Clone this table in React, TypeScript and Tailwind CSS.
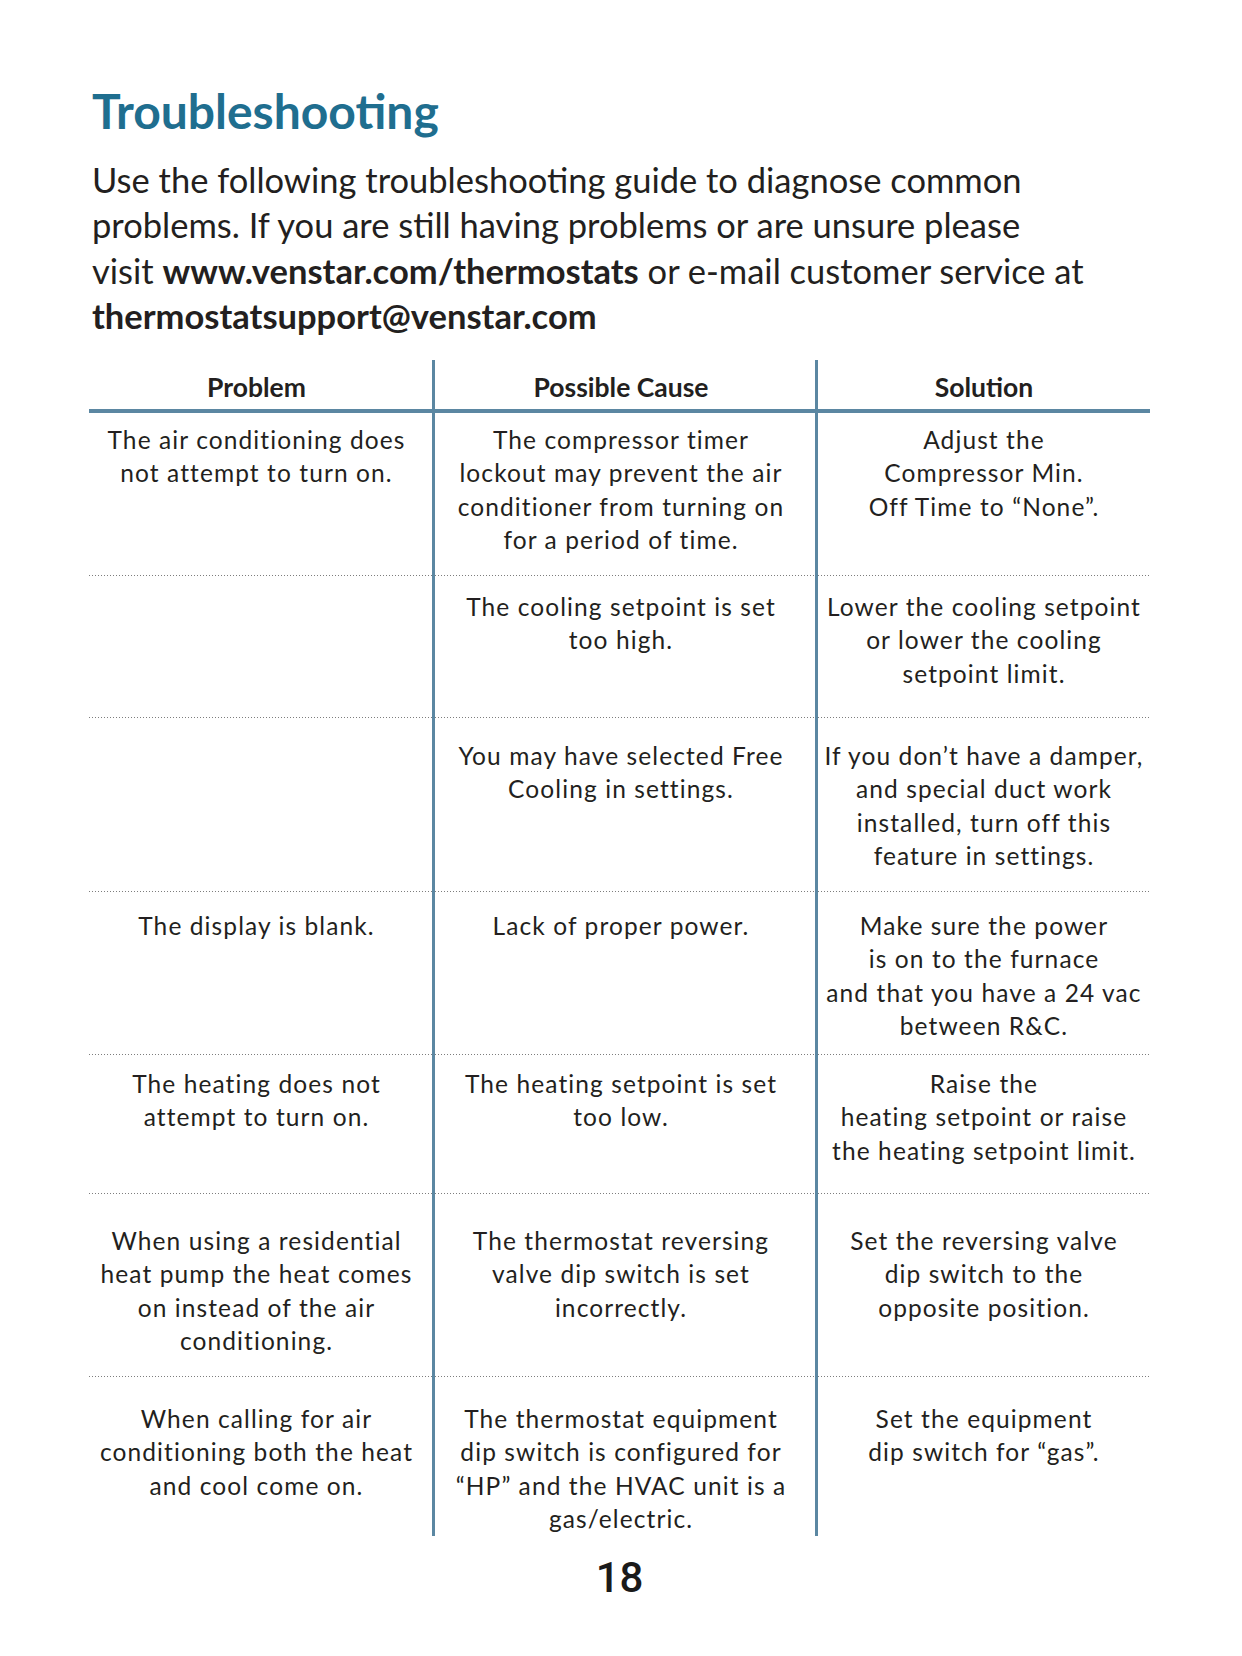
import React from "react";

const LINE = "border-[#5b87a2]";

type Row = { h: string; pt: string; a: string[]; b: string[]; c: string[] };

const rows: Row[] = [
  {
    h: "h-[163px]",
    pt: "pt-[10px]",
    a: ["The air conditioning does", "not attempt to turn on."],
    b: ["The compressor timer", "lockout may prevent the air", "conditioner from turning on", "for a period of time."],
    c: ["Adjust the", "Compressor Min.", "Off Time to “None”."],
  },
  {
    h: "h-[142px]",
    pt: "pt-[14px]",
    a: [],
    b: ["The cooling setpoint is set", "too high."],
    c: ["Lower the cooling setpoint", "or lower the cooling", "setpoint limit."],
  },
  {
    h: "h-[174px]",
    pt: "pt-[21px]",
    a: [],
    b: ["You may have selected Free", "Cooling in settings."],
    c: ["If you don’t have a damper,", "and special duct work", "installed, turn off this", "feature in settings."],
  },
  {
    h: "h-[163px]",
    pt: "pt-[17px]",
    a: ["The display is blank."],
    b: ["Lack of proper power."],
    c: ["Make sure the power", "is on to the furnace", "and that you have a 24 vac", "between R&C."],
  },
  {
    h: "h-[139px]",
    pt: "pt-[12px]",
    a: ["The heating does not", "attempt to turn on."],
    b: ["The heating setpoint is set", "too low."],
    c: ["Raise the", "heating setpoint or raise", "the heating setpoint limit."],
  },
  {
    h: "h-[183px]",
    pt: "pt-[30px]",
    a: ["When using a residential", "heat pump the heat comes", "on instead of the air", "conditioning."],
    b: ["The thermostat reversing", "valve dip switch is set", "incorrectly."],
    c: ["Set the reversing valve", "dip switch to the", "opposite position."],
  },
  {
    h: "h-[156px]",
    pt: "pt-[25px]",
    a: ["When calling for air", "conditioning both the heat", "and cool come on."],
    b: ["The thermostat equipment", "dip switch is configured for", "“HP” and the HVAC unit is a", "gas/electric."],
    c: ["Set the equipment", "dip switch for “gas”."],
  },
];

function Lines({ items }: { items: string[] }) {
  return (
    <>
      {items.map((t, i) => (
        <div key={i} className="whitespace-nowrap">
          {t}
        </div>
      ))}
    </>
  );
}

function Dotted() {
  return <div className="h-px bg-[linear-gradient(to_right,#7d7d7d_1px,transparent_1px)] bg-[length:3px_1px]" />;
}

export default function App() {
  return (
    <div
      className="w-[1242px] h-[1656px] bg-white text-[#231f20] pt-[87px]"
      style={{ fontFamily: "Lato, 'Open Sans', sans-serif" }}
    >
      <div className="ml-[89px] w-[1061px]">
        <h1 className="pl-[3px] text-[48px] leading-[48px] font-bold text-[#1f6e8f]">Troubleshooting</h1>
        <p className="pl-[3px] mt-[22px] text-[34.5px] leading-[45.4px]">
          Use the following troubleshooting guide to diagnose common
          <br />
          problems. If you are still having problems or are unsure please
          <br />
          visit <span className="font-bold">www.venstar.com/thermostats</span> or e-mail customer service at
          <br />
          <span className="font-bold">thermostatsupport@venstar.com</span>
        </p>

        <div className="mt-[21px]">
          <div className="flex h-[49px] text-[26.5px] leading-[26px] font-bold text-center">
            <div className="w-[343px] pt-[14px] pr-[8px]">Problem</div>
            <div className={`w-[386px] pt-[14px] pr-[8px] border-x-[3px] ${LINE}`}>Possible Cause</div>
            <div className="w-[332px] pt-[14px]">Solution</div>
          </div>
          <div className="h-[4px] bg-[#5b87a2]" />

          {rows.map((r, i) => (
            <div key={i} className={`flex flex-col ${r.h}`}>
              <div className="flex flex-1 text-[24.5px] leading-[33.5px] tracking-[1.1px] text-center">
                <div className={`w-[343px] pr-[8px] ${r.pt}`}>
                  <Lines items={r.a} />
                </div>
                <div className={`w-[386px] pr-[8px] border-x-[3px] ${LINE} ${r.pt}`}>
                  <Lines items={r.b} />
                </div>
                <div className={`w-[332px] ${r.pt}`}>
                  <Lines items={r.c} />
                </div>
              </div>
              {i < rows.length - 1 && (
                <div className="flex h-px">
                  <div className="w-[343px]">
                    <Dotted />
                  </div>
                  <div className={`w-[386px] border-x-[3px] ${LINE}`}>
                    <Dotted />
                  </div>
                  <div className="w-[332px]">
                    <Dotted />
                  </div>
                </div>
              )}
            </div>
          ))}
        </div>

        <div
          className="mt-[24px] text-center text-[42px] leading-[42px] font-medium text-[#1a1a1a]"
          style={{ fontFamily: "Roboto, sans-serif" }}
        >
          18
        </div>
      </div>
    </div>
  );
}
